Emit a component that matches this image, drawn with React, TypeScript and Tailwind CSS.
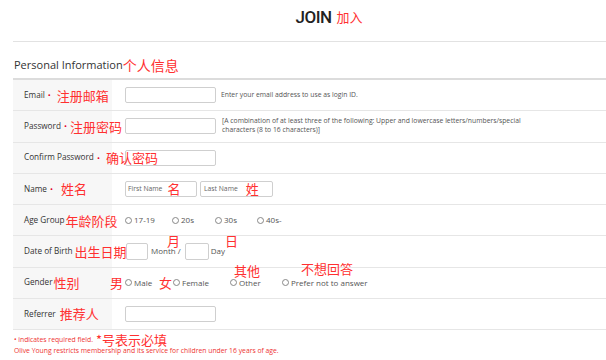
import React from "react";

const Dot = () => <span className="ml-[3px] text-[8px] text-[#e4002b]">•</span>;

const Note = ({ children, className = "" }: { children: React.ReactNode; className?: string }) => (
  <span
    className={`relative z-10 whitespace-nowrap text-[13px] leading-none text-[#ff3030] ${className}`}
    style={{ fontFamily: '"Noto Sans CJK SC", sans-serif' }}
  >
    {children}
  </span>
);

const Radio = ({ label, className = "" }: { label: string; className?: string }) => (
  <div className={`flex shrink-0 items-center gap-[2px] ${className}`}>
    <span className="h-[7px] w-[7px] rounded-full border border-[#888]" />
    <span className="text-[8px] text-[#555]">{label}</span>
  </div>
);

const Row = ({ label, children }: { label: React.ReactNode; children?: React.ReactNode }) => (
  <div className="relative flex h-[31.25px] border-b border-[#e6e6e6]">
    <div className="flex w-[99px] shrink-0 items-center whitespace-nowrap bg-[#f7f7f7] pl-[11px] text-[8.2px] text-[#333]">
      {label}
    </div>
    <div className="flex flex-1 items-center pl-[13px]">{children}</div>
  </div>
);

const Box = ({ className = "", children }: { className?: string; children?: React.ReactNode }) => (
  <div className={`flex shrink-0 items-center rounded-[2px] border border-[#cfcfcf] bg-white ${className}`}>
    {children}
  </div>
);

export default function App() {
  return (
    <div className="h-[360px] w-[606px] overflow-hidden bg-white pl-[13px]" style={{ fontFamily: '"Open Sans", sans-serif' }}>
      <div className="flex h-[42px] justify-center border-b border-[#e2e2e2] pl-[8px] pt-[5px]">
        <div className="relative h-[20px]">
          <span className="text-[17px] font-medium leading-[20px] tracking-[-0.5px] text-[#222]" style={{ fontFamily: "Roboto, sans-serif" }}>
            JOIN
          </span>
          <Note className="!absolute left-[41px] top-[5px]">加入</Note>
        </div>
      </div>

      <div className="flex h-[38px] items-end border-b-2 border-[#dcdcdc] pb-[5px] pl-[1px]">
        <span className="text-[11px] text-[#333]">Personal Information</span>
        <Note className="mb-[1px] text-[14px]">个人信息</Note>
      </div>

      <Row
        label={
          <>
            Email<Dot />
            <Note className="ml-[6px]">注册邮箱</Note>
          </>
        }
      >
        <Box className="h-[16px] w-[91px]" />
        <span className="ml-[5px] text-[6.8px] text-[#555]">Enter your email address to use as login ID.</span>
      </Row>

      <Row
        label={
          <>
            Password<Dot />
            <Note className="ml-[3px]">注册密码</Note>
          </>
        }
      >
        <Box className="h-[16px] w-[91px]" />
        <span className="ml-[6px] mt-[-2px] text-[6.8px] leading-[9px] text-[#555]">
          [A combination of at least three of the following: Upper and lowercase letters/numbers/special
          <br />
          characters (8 to 16 characters)]
        </span>
      </Row>

      <Row
        label={
          <>
            Confirm Password<Dot />
            <Note className="ml-[6px]">确认密码</Note>
          </>
        }
      >
        <Box className="h-[16px] w-[91px]" />
      </Row>

      <Row
        label={
          <>
            Name<Dot />
            <Note className="ml-[8px]">姓名</Note>
          </>
        }
      >
        <Box className="h-[16px] w-[72px] pl-[2px]">
          <span className="text-[6.8px] text-[#666]">First Name</span>
          <Note className="ml-[5px]">名</Note>
        </Box>
        <Box className="ml-[3px] h-[16px] w-[73px] pl-[3px]">
          <span className="text-[6.8px] text-[#666]">Last Name</span>
          <Note className="ml-[8px]">姓</Note>
        </Box>
      </Row>

      <Row
        label={
          <>
            Age Group
            <Note className="ml-[1px]">年龄阶段</Note>
          </>
        }
      >
        <Radio label="17-19" className="w-[47px]" />
        <Radio label="20s" className="w-[43px]" />
        <Radio label="30s" className="w-[42px]" />
        <Radio label="40s-" />
      </Row>

      <Row
        label={
          <>
            Date of Birth
            <Note className="ml-[2px]">出生日期</Note>
          </>
        }
      >
        <Box className="ml-[1px] h-[17px] w-[22px]" />
        <span className="ml-[3px] text-[8px] text-[#555]">Month /</span>
        <Box className="ml-[4px] h-[17px] w-[24px]" />
        <span className="ml-[2px] text-[8px] text-[#555]">Day</span>
        <Note className="!absolute left-[154px] top-[-2px]">月</Note>
        <Note className="!absolute left-[212px] top-[-2px]">日</Note>
      </Row>

      <Row
        label={
          <>
            Gender
            <Note className="ml-[1px]">性别</Note>
          </>
        }
      >
        <Note className="!absolute left-[97px] top-[8px]">男</Note>
        <Radio label="Male" className="w-[34px]" />
        <Note className="w-[14px]">女</Note>
        <Radio label="Female" className="w-[57px]" />
        <Radio label="Other" className="w-[52px]" />
        <Radio label="Prefer not to answer" />
        <Note className="!absolute left-[221px] top-[-4px]">其他</Note>
        <Note className="!absolute left-[288px] top-[-6px]">不想回答</Note>
      </Row>

      <Row
        label={
          <>
            Referrer
            <Note className="ml-[4px]">推荐人</Note>
          </>
        }
      >
        <Box className="h-[16px] w-[91px]" />
      </Row>

      <div className="pl-[1px] pt-[3px] text-[6.8px] leading-[9px] text-[#ee3333]">
        <div className="flex items-center">
          <span>• indicates required field.</span>
          <Note className="ml-[3px]">*号表示必填</Note>
        </div>
        <div>Olive Young restricts membership and its service for children under 16 years of age.</div>
      </div>
    </div>
  );
}
